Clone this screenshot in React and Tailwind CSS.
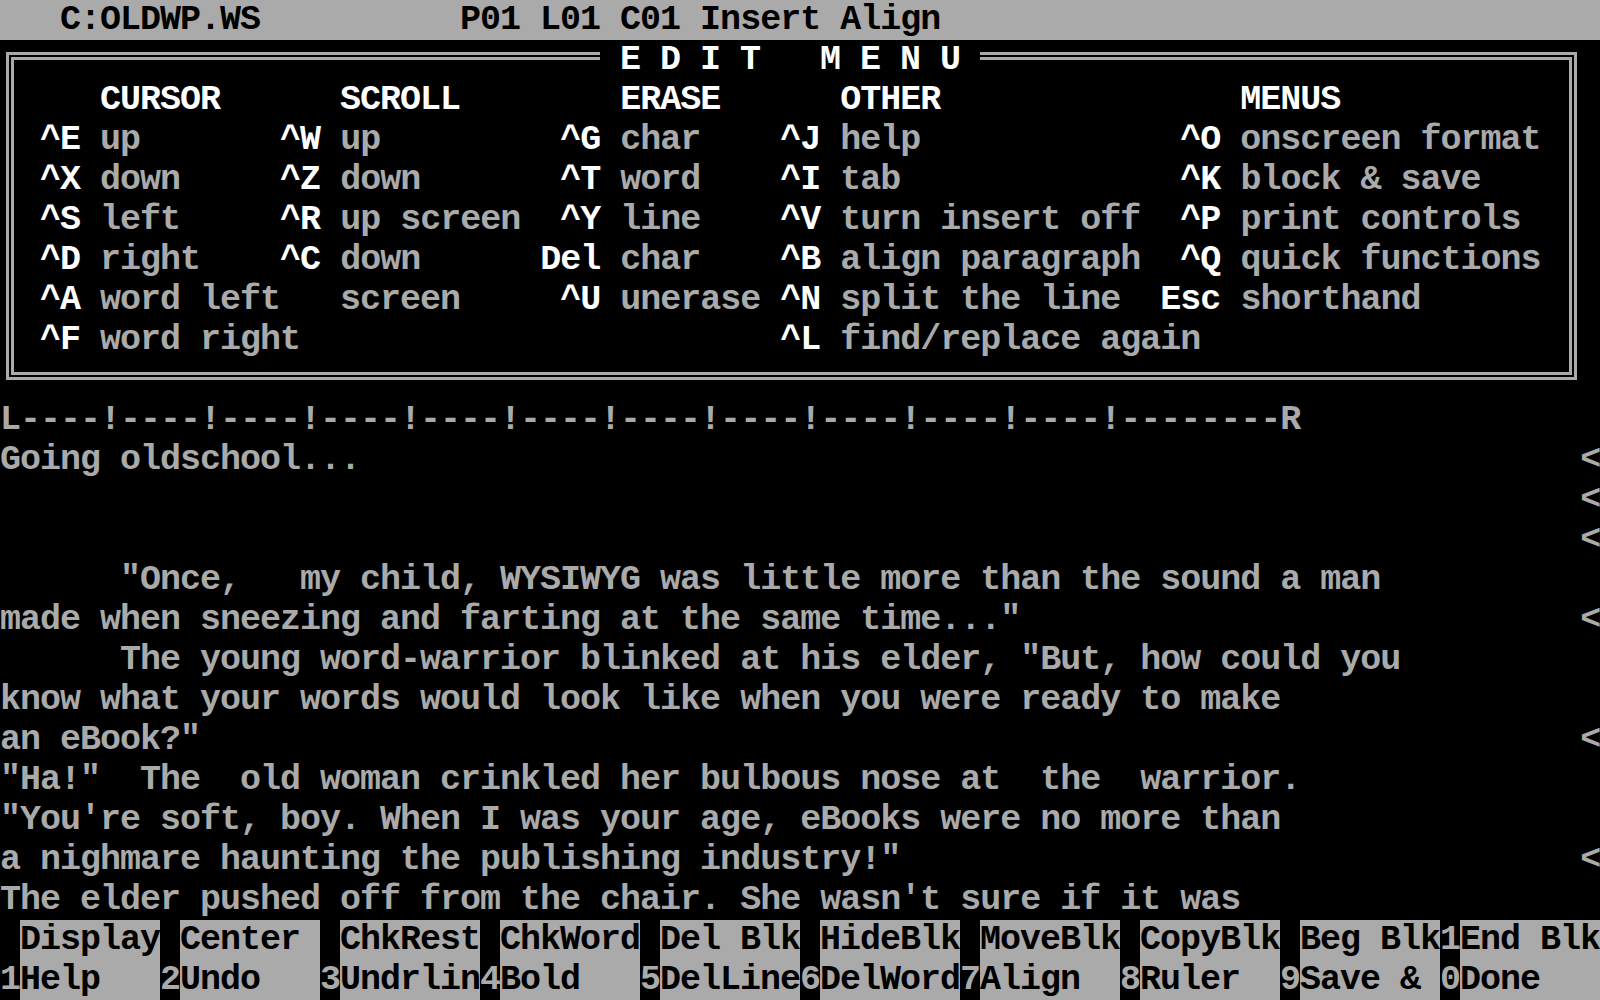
import React from "react";

const menuRows = [
  [[5, "CURSOR", 1], [17, "SCROLL", 1], [31, "ERASE", 1], [42, "OTHER", 1], [62, "MENUS", 1]],
  [[2, "^E", 1], [5, "up"], [14, "^W", 1], [17, "up"], [28, "^G", 1], [31, "char"], [39, "^J", 1], [42, "help"], [59, "^O", 1], [62, "onscreen format"]],
  [[2, "^X", 1], [5, "down"], [14, "^Z", 1], [17, "down"], [28, "^T", 1], [31, "word"], [39, "^I", 1], [42, "tab"], [59, "^K", 1], [62, "block & save"]],
  [[2, "^S", 1], [5, "left"], [14, "^R", 1], [17, "up screen"], [28, "^Y", 1], [31, "line"], [39, "^V", 1], [42, "turn insert off"], [59, "^P", 1], [62, "print controls"]],
  [[2, "^D", 1], [5, "right"], [14, "^C", 1], [17, "down"], [27, "Del", 1], [31, "char"], [39, "^B", 1], [42, "align paragraph"], [59, "^Q", 1], [62, "quick functions"]],
  [[2, "^A", 1], [5, "word left"], [17, "screen"], [28, "^U", 1], [31, "unerase"], [39, "^N", 1], [42, "split the line"], [58, "Esc", 1], [62, "shorthand"]],
  [[2, "^F", 1], [5, "word right"], [39, "^L", 1], [42, "find/replace again"]],
];

function MenuRow({ segs }) {
  let cur = 1;
  const parts = [];
  segs.forEach(([col, text, bright], i) => {
    const pad = " ".repeat(Math.max(0, col - cur));
    parts.push(
      <React.Fragment key={i}>
        {pad}
        <span className={bright ? "text-white" : "text-[#aaaaaa]"}>{text}</span>
      </React.Fragment>
    );
    cur = col + text.length;
  });
  return <div className="h-[40px] whitespace-pre">{parts}</div>;
}

const textRows = [
  ["Going oldschool...", true],
  ["", true],
  ["", true],
  ['      "Once,   my child, WYSIWYG was little more than the sound a man', false],
  ['made when sneezing and farting at the same time..."', true],
  ['      The young word-warrior blinked at his elder, "But, how could you', false],
  ["know what your words would look like when you were ready to make", false],
  ['an eBook?"', true],
  ['"Ha!"  The  old woman crinkled her bulbous nose at  the  warrior.', false],
  ['"You\'re soft, boy. When I was your age, eBooks were no more than', false],
  ['a nighmare haunting the publishing industry!"', true],
  ["The elder pushed off from the chair. She wasn't sure if it was", false],
];

const topKeys = ["Display", "Center", "ChkRest", "ChkWord", "Del Blk", "HideBlk", "MoveBlk", "CopyBlk", "Beg Blk", "End Blk"];
const bottomKeys = ["Help", "Undo", "Undrlin", "Bold", "DelLine", "DelWord", "Align", "Ruler", "Save &", "Done"];

const ruler = "L" + "----!".repeat(11) + "--------R";

export default function App() {
  return (
    <div className="w-[1600px] h-[1000px] bg-black overflow-hidden font-['Liberation_Mono',monospace] font-bold text-[35px] tracking-[-1px] leading-[40px] text-[#aaaaaa]">
      <div className="h-[40px] bg-[#aaaaaa] text-black whitespace-pre">{"   C:OLDWP.WS          P01 L01 C01 Insert Align"}</div>

      <div className="h-[360px] pt-[12px] pl-[6px]">
        <div className="relative w-[1571px] h-[328px] border-[8px] border-double border-[#aaaaaa] pt-[20px] pl-[6px]">
          <div className="absolute top-[-20px] left-[586px] h-[40px] bg-black text-white whitespace-pre">{" E D I T   M E N U "}</div>
          {menuRows.map((segs, i) => (
            <MenuRow key={i} segs={segs} />
          ))}
        </div>
      </div>

      <div className="h-[40px] whitespace-pre">{ruler}</div>

      {textRows.map(([t, mark], i) => (
        <div key={i} className="h-[40px] whitespace-pre">
          {mark ? t.padEnd(79, " ") + "<" : t}
        </div>
      ))}

      <div className="flex h-[40px]">
        {topKeys.map((k, i) => (
          <div key={i} className="flex w-[160px]">
            <div className="w-[20px] bg-black text-[#aaaaaa] whitespace-pre">{i === 9 ? "1" : " "}</div>
            <div className="w-[140px] bg-[#aaaaaa] text-black whitespace-pre">{k}</div>
          </div>
        ))}
      </div>
      <div className="flex h-[40px]">
        {bottomKeys.map((k, i) => (
          <div key={i} className="flex w-[160px]">
            <div className="w-[20px] bg-black text-[#aaaaaa] whitespace-pre">{String((i + 1) % 10)}</div>
            <div className="w-[140px] bg-[#aaaaaa] text-black whitespace-pre">{k}</div>
          </div>
        ))}
      </div>
    </div>
  );
}
